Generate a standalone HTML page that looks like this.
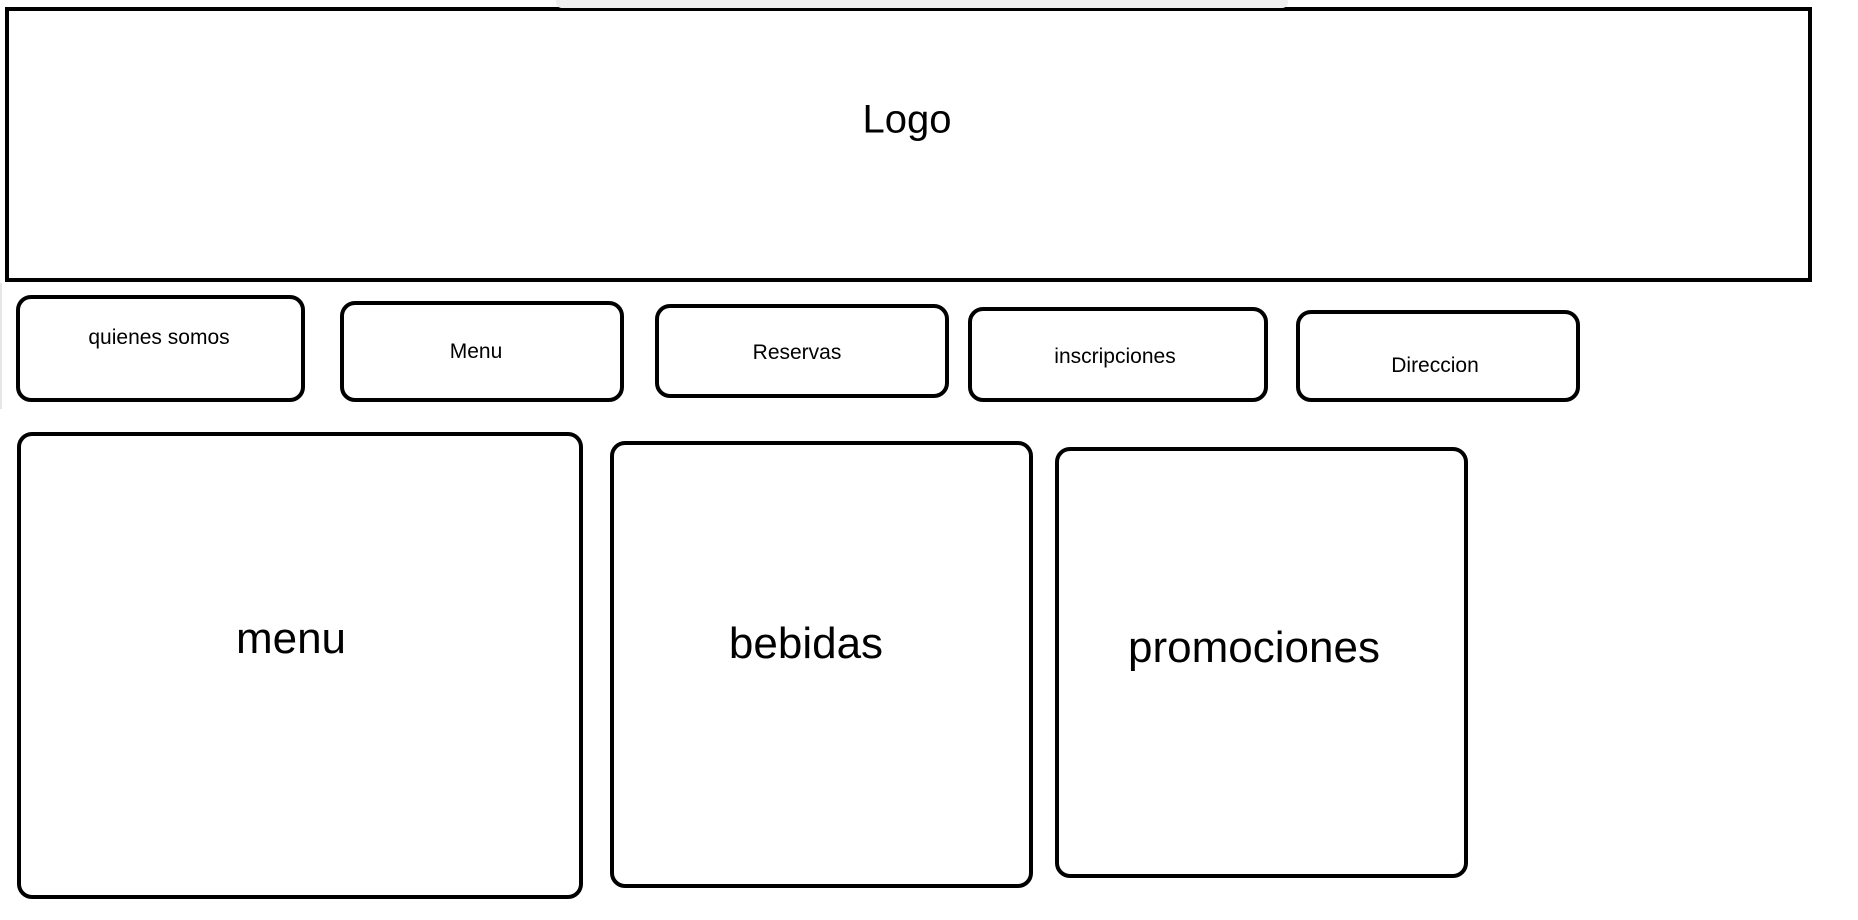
<!DOCTYPE html>
<html><head><meta charset="utf-8"><style>
html,body{margin:0;padding:0;background:#fff;width:1858px;height:920px;overflow:hidden;position:relative;font-family:"Liberation Sans",sans-serif;color:#000}
.b{position:absolute;box-sizing:border-box;border:4px solid #000;background:#fff}
.r{border-radius:15px}
.t{position:absolute;transform:translate(-50%,-50%);white-space:nowrap}
.n{font-size:21px}
.c{font-size:44px}
</style></head><body>
<div style="position:absolute;left:0;top:283px;width:2px;height:126px;background:#e6e6e6"></div>
<div class="b" style="left:5px;top:7px;width:1807px;height:275px"></div>
<div style="position:absolute;left:556px;top:0;width:732px;height:8px;background:#f0f0f0;border-radius:0 0 6px 6px"></div>
<div class="t" style="left:907px;top:120px;font-size:40px">Logo</div>

<div class="b r" style="left:16px;top:295px;width:289px;height:107px"></div>
<div class="t n" style="left:159px;top:338px">quienes somos</div>
<div class="b r" style="left:340px;top:301px;width:284px;height:101px"></div>
<div class="t n" style="left:476px;top:352px">Menu</div>
<div class="b r" style="left:655px;top:304px;width:294px;height:94px"></div>
<div class="t n" style="left:797px;top:353px">Reservas</div>
<div class="b r" style="left:968px;top:307px;width:300px;height:95px"></div>
<div class="t n" style="left:1115px;top:357px">inscripciones</div>
<div class="b r" style="left:1296px;top:310px;width:284px;height:92px"></div>
<div class="t n" style="left:1435px;top:366px">Direccion</div>

<div class="b r" style="left:17px;top:432px;width:566px;height:467px"></div>
<div class="t c" style="left:291px;top:639px">menu</div>
<div class="b r" style="left:610px;top:441px;width:423px;height:447px"></div>
<div class="t c" style="left:806px;top:644px">bebidas</div>
<div class="b r" style="left:1055px;top:447px;width:413px;height:431px"></div>
<div class="t c" style="left:1254px;top:648px">promociones</div>
</body></html>
